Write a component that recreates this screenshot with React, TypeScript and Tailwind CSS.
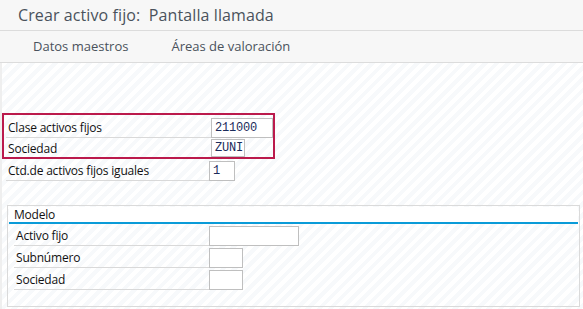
import React from 'react';

const stripes =
  'bg-[repeating-linear-gradient(135deg,#ffffff_0px,#ffffff_4px,#f7f9fb_4px,#f7f9fb_8px)]';

const Field = ({ value, w, h = 'h-[20px]' }: { value?: string; w: string; h?: string }) => (
  <div
    className={`${w} ${h} bg-white border border-[#bfbfbf] flex items-center pl-[3px] text-[12px] text-[#1b2b5a] font-['Liberation_Mono',monospace]`}
  >
    {value}
  </div>
);

const Row = ({
  label,
  labelW,
  value,
  w,
  rowH = 'h-[22px]',
  fieldH,
  line = true,
}: {
  label: string;
  labelW: string;
  value?: string;
  w: string;
  rowH?: string;
  fieldH?: string;
  line?: boolean;
}) => (
  <div className={`flex items-end ${rowH}`}>
    <div
      className={`${labelW} h-full flex items-center pl-[2px] pt-[3px] text-[12px] text-[#111] ${
        line ? 'border-b border-[#d9d9d9]' : ''
      }`}
    >
      {label}
    </div>
    <Field value={value} w={w} h={fieldH} />
  </div>
);

export default function App() {
  return (
    <div className="w-[583px] h-[309px] flex flex-col overflow-hidden bg-white font-['Open_Sans',sans-serif]">
      <div className="h-[31px] shrink-0 bg-[#f7f7f7] border-b border-[#dcdcdc] flex items-center pl-[18px] text-[16px] text-[#4a525c] tracking-[0.1px]">
        Crear activo fijo:&nbsp; Pantalla llamada
      </div>
      <div className="h-[32px] shrink-0 bg-[#f7f7f7] border-b border-[#dcdcdc] flex items-center text-[13px] text-[#4a525c]">
        <span className="ml-[33px]">Datos maestros</span>
        <span className="ml-[43px]">Áreas de valoración</span>
      </div>
      <div className="flex-1 flex">
        <div className="w-[2px] bg-[#efefef]" />
        <div className={`flex-1 ${stripes} pt-[50px]`}>
          <div className="w-[273px] border-2 border-[#bb1a4c] pl-[2px] tracking-[-0.2px]">
            <Row label="Clase activos fijos" labelW="w-[205px]" value="211000" w="w-[62px]" rowH="h-[23px]" fieldH="h-[20px]" />
            <Row label="Sociedad" labelW="w-[205px]" value="ZUNI" w="w-[34px]" rowH="h-[19px]" fieldH="h-[18px]" line={false} />
          </div>
          <div className="pl-[4px] tracking-[-0.2px]">
            <Row label="Ctd.de activos fijos iguales" labelW="w-[203px]" value="1" w="w-[26px]" rowH="h-[22px]" fieldH="h-[20px]" />
          </div>
          <div className="mt-[24px] ml-[5px] w-[573px] h-[102px] border border-[#dadada] p-[1px] tracking-[-0.2px]">
            <div className="h-[17px] bg-white border-b-2 border-[#0a9bd8] flex items-center pl-[5px] pt-[1px] text-[12px] text-[#111]">
              Modelo
            </div>
            <div className="pl-[5px]">
              <Row label="Activo fijo" labelW="w-[195px]" w="w-[90px]" fieldH="h-[20px]" />
              <Row label="Subnúmero" labelW="w-[195px]" w="w-[34px]" fieldH="h-[20px]" />
              <Row label="Sociedad" labelW="w-[195px]" w="w-[34px]" fieldH="h-[20px]" />
            </div>
          </div>
        </div>
      </div>
    </div>
  );
}
